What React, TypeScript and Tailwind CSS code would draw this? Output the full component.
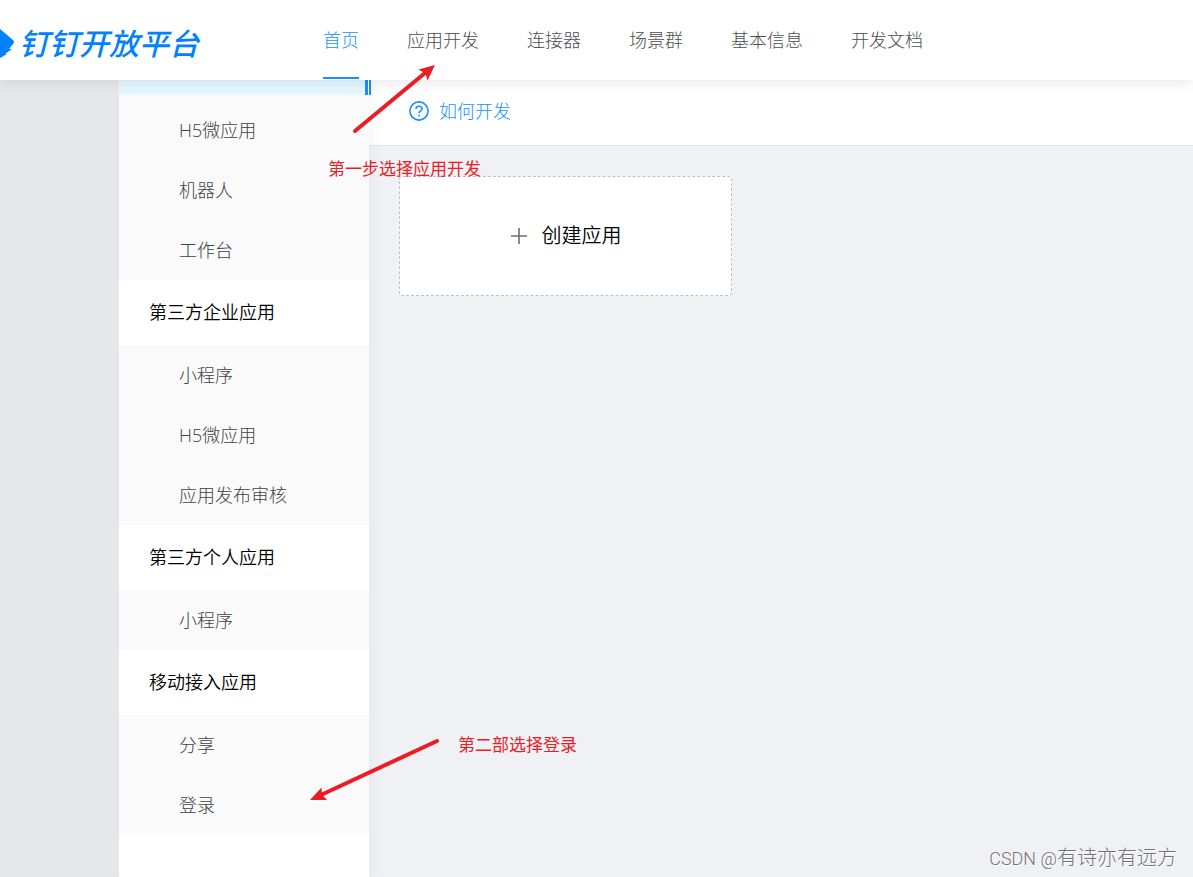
type MenuGroup = {
    title?: string;
    items: string[];
};

const navItems = [
    "首页",
    "应用开发",
    "连接器",
    "场景群",
    "基本信息",
    "开发文档",
];

const menuGroups: MenuGroup[] = [
    { items: ["H5微应用", "机器人", "工作台"] },
    { title: "第三方企业应用", items: ["小程序", "H5微应用", "应用发布审核"] },
    { title: "第三方个人应用", items: ["小程序"] },
    { title: "移动接入应用", items: ["分享", "登录"] },
];

const Header = () => (
    <header className="relative z-10 flex h-20 shrink-0 items-center bg-white shadow-[0_2px_14px_rgba(0,0,0,0.1)]">
        <a
            href="#"
            className="flex w-[323px] shrink-0 items-center gap-1 pt-2 text-[#0082ff]"
        >
            <svg width="15" height="32" viewBox="0 0 15 32" fill="currentColor">
                <path d="M0 1 L13 12 Q15 14 13 16 L9 21 L12 21 L5 26 L7 26 L0 30 Z" />
            </svg>
            <span className="text-[30px] leading-9 font-medium italic">
                钉钉开放平台
            </span>
        </a>

        <nav className="flex h-full gap-12">
            {navItems.map((item, i) => (
                <a
                    key={item}
                    href="#"
                    className={
                        i === 0
                            ? "mb-px border-b-2 border-[#1890ff] text-lg leading-[80px] font-light whitespace-nowrap text-[#1890ff]"
                            : "text-lg leading-[80px] font-light whitespace-nowrap text-[#4b4d52]"
                    }
                >
                    {item}
                </a>
            ))}
        </nav>
    </header>
);

const Sidebar = () => (
    <aside className="relative w-[250px] shrink-0 bg-white shadow-[6px_0_12px_rgba(0,0,0,0.03)]">
        {/* bottom edge of the selected entry, scrolled under the header */}
        <div className="h-[15px] bg-[#e6f7ff]" />
        <div className="absolute top-0 -right-0.5 h-[15px] w-1.5 border-r-2 border-l-3 border-[#1890ff] bg-white" />

        {menuGroups.map((group, i) => (
            <div key={i}>
                {group.title && (
                    <h2 className="pl-[30px] text-lg leading-[65px] font-[350] text-black">
                        {group.title}
                    </h2>
                )}
                <ul className={i === 0 ? "bg-[#fafafa] pt-[5px]" : "bg-[#fafafa]"}>
                    {group.items.map((item) => (
                        <li key={item}>
                            <a
                                href="#"
                                className="block pl-[60px] text-lg leading-[60px] font-light text-[#404247]"
                            >
                                {item}
                            </a>
                        </li>
                    ))}
                </ul>
            </div>
        ))}
    </aside>
);

const Content = () => (
    <main className="min-w-0 flex-1">
        <div className="flex h-[66px] items-center border-b border-[#e4e5e9] bg-white pb-1 pl-10">
            <a
                href="#"
                className="flex items-center gap-2.5 text-lg leading-6 font-light text-[#1890ff]"
            >
                <svg
                    width="20"
                    height="20"
                    viewBox="0 0 20 20"
                    fill="none"
                    stroke="currentColor"
                    strokeWidth="1.6"
                >
                    <circle cx="10" cy="10" r="9.1" />
                    <path d="M7 8 C7 4.3 13 4.3 13 8 C13 10 10 9.8 10 12.2" />
                    <path d="M10 13.8 V15.4" />
                </svg>
                如何开发
            </a>
        </div>

        <div className="p-[30px]">
            <button
                type="button"
                className="flex h-[120px] w-[333px] items-center justify-center gap-3.5 rounded border border-dashed border-[#bfbfbf] bg-white text-xl font-[350] text-black"
            >
                <svg
                    width="18"
                    height="18"
                    viewBox="0 0 18 18"
                    stroke="#6b6d70"
                    strokeWidth="1.6"
                >
                    <path d="M1 9 H17 M9 1 V17" />
                </svg>
                创建应用
            </button>
        </div>
    </main>
);

// step by step notes drawn over the console
const Notes = () => (
    <>
        <svg
            className="absolute top-[60px] left-[345px] z-20"
            width="95"
            height="80"
            viewBox="0 0 95 80"
            fill="#ed1c24"
        >
            <path
                d="M10 71 L80 13"
                stroke="#ed1c24"
                strokeWidth="4"
                strokeLinecap="round"
            />
            <path d="M90 5 L82.500 20.500 L80.500 13.500 L73.500 9.500 Z" />
        </svg>
        <p className="absolute top-[157px] left-[328px] z-20 text-[17px] leading-6 text-[#ed1c24]">
            第一步选择应用开发
        </p>

        <svg
            className="absolute top-[735px] left-[305px] z-20"
            width="140"
            height="70"
            viewBox="0 0 140 70"
            fill="#ed1c24"
        >
            <path
                d="M132 6 L17 59.500"
                stroke="#ed1c24"
                strokeWidth="4"
                strokeLinecap="round"
            />
            <path d="M5 65 L16.500 52.500 L17 59.500 L22 65 Z" />
        </svg>
        <p className="absolute top-[733px] left-[458px] z-20 text-[17px] leading-6 text-[#ed1c24]">
            第二部选择登录
        </p>

        <p className="absolute right-4 bottom-1 z-20 font-['Roboto','Noto_Sans_CJK_SC',sans-serif] text-xl leading-7 font-light text-[#707276] [text-shadow:1px_1px_0_#ffffff]">
            <span className="text-lg leading-7">CSDN @</span>
            有诗亦有远方
        </p>
    </>
);

const App = () => {
    return (
        <div className="relative flex min-h-screen flex-col bg-[#f0f1f5] font-['Open_Sans','Noto_Sans_CJK_SC',sans-serif]">
            <Header />
            <div className="flex flex-1">
                <div className="w-[119px] shrink-0 bg-[#e6e7eb]" />
                <Sidebar />
                <Content />
            </div>
            <Notes />
        </div>
    );
};

export default App;
